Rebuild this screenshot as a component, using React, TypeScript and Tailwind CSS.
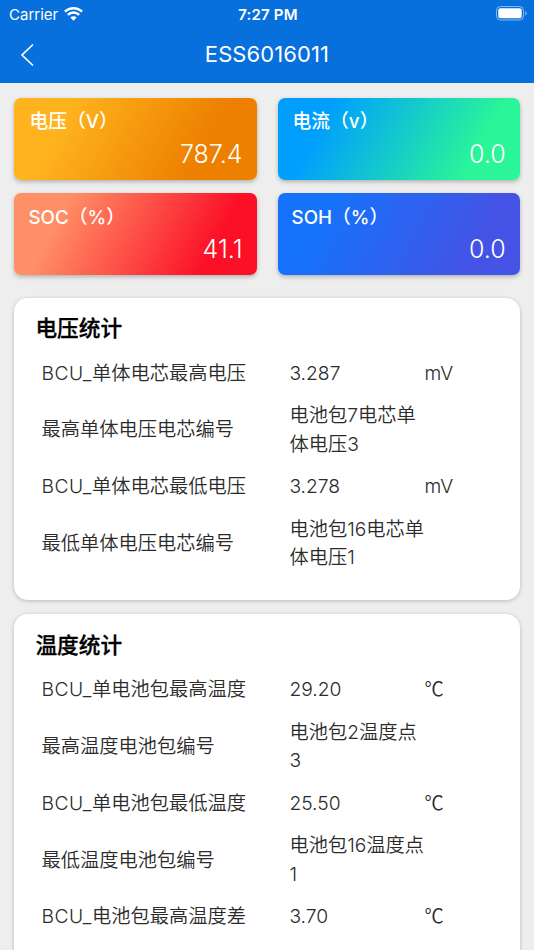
import React from 'react';

interface Metric {
  label: string;
  labelClass: string;
  unit: string;
  value: string;
  gradient: string;
}

interface StatRow {
  prefix?: string;
  label: string;
  value: string;
  unit?: string;
}

const metrics: Metric[] = [
  {
    label: '电压',
    labelClass: 'pl-px',
    unit: 'V',
    value: '787.4',
    gradient: 'bg-[linear-gradient(118deg,#ffb41f_20%,#ed8000_75%)]',
  },
  {
    label: '电流',
    labelClass: 'pl-px',
    unit: 'v',
    value: '0.0',
    gradient: 'bg-[linear-gradient(118deg,#009ffd_20%,#2af598_80%)]',
  },
  {
    label: 'SOC',
    labelClass: '',
    unit: '%',
    value: '41.1',
    gradient: 'bg-[linear-gradient(118deg,#ff8f66_20%,#fb1027_80%)]',
  },
  {
    label: 'SOH',
    labelClass: '',
    unit: '%',
    value: '0.0',
    gradient: 'bg-[linear-gradient(118deg,#1672fb_20%,#4453e5_80%)]',
  },
];

const voltageRows: StatRow[] = [
  { prefix: 'BCU_', label: '单体电芯最高电压', value: '3.287', unit: 'mV' },
  { label: '最高单体电压电芯编号', value: '电池包7电芯单体电压3' },
  { prefix: 'BCU_', label: '单体电芯最低电压', value: '3.278', unit: 'mV' },
  { label: '最低单体电压电芯编号', value: '电池包16电芯单体电压1' },
];

const temperatureRows: StatRow[] = [
  { prefix: 'BCU_', label: '单电池包最高温度', value: '29.20', unit: '℃' },
  { label: '最高温度电池包编号', value: '电池包2温度点3' },
  { prefix: 'BCU_', label: '单电池包最低温度', value: '25.50', unit: '℃' },
  { label: '最低温度电池包编号', value: '电池包16温度点1' },
  { prefix: 'BCU_', label: '电池包最高温度差', value: '3.70', unit: '℃' },
];

function StatusBar() {
  return (
    <div className="grid h-7 grid-cols-3 items-center pl-[9px] pr-[7px] text-[15px] leading-none">
      <div className="flex items-center gap-[6px]">
        <span>Carrier</span>
        <svg className="-mt-[2px]" width="19" height="15" viewBox="0 0 20 15" fill="none" stroke="white" strokeWidth="2.7">
          <path d="M1 5.6a12.9 12.9 0 0 1 18 0" />
          <path d="M4.1 8.9a8.4 8.4 0 0 1 11.8 0" />
          <path d="M10 15l-3.3-3.3a4.7 4.7 0 0 1 6.6 0z" fill="white" stroke="none" />
        </svg>
      </div>
      <span className="whitespace-nowrap text-center font-semibold tracking-[0.2px]">7:27 PM</span>
      <svg className="-mt-px justify-self-end" width="31" height="15" viewBox="0 0 31 15" fill="none">
        <rect x="0.5" y="0.5" width="27" height="13.5" rx="4" stroke="white" strokeOpacity="0.5" />
        <rect x="2.3" y="2.3" width="23.4" height="9.9" rx="2" fill="white" />
        <path d="M29.3 5v4.6c.9-.4 1.4-1.3 1.4-2.3s-.5-1.9-1.4-2.3z" fill="white" fillOpacity="0.5" />
      </svg>
    </div>
  );
}

function MetricCard({ metric }: { metric: Metric }) {
  return (
    <div
      className={`flex h-[82px] flex-col justify-between rounded-[7px] px-[14px] pb-[10px] pt-[9.6px] text-white shadow-[0_2px_4px_rgba(0,0,0,0.25)] ${metric.gradient}`}
    >
      <div className={`whitespace-nowrap text-[18.8px] font-medium leading-[29px] ${metric.labelClass}`}>
        {metric.label}（{metric.unit}）
      </div>
      <div className="text-right text-[25px] font-light leading-[32px]">{metric.value}</div>
    </div>
  );
}

function StatCard({ title, rows, className }: { title: string; rows: StatRow[]; className: string }) {
  return (
    <section className={`rounded-[14px] bg-white pl-[21px] pt-[15.8px] shadow-[0_1px_4px_rgba(0,0,0,0.22)] ${className}`}>
      <h2 className="text-[21.7px] font-medium leading-[31px] text-black [-webkit-text-stroke:0.3px_black]">{title}</h2>
      <div className="pl-[6px]">
        {rows.map((row) => (
          <div
            key={row.label}
            className="grid h-[56.8px] grid-cols-[248px_135px_1fr] items-center text-[19.25px] font-[350] leading-[28.4px] text-[#2b2b2b]"
          >
            <span className="whitespace-nowrap">
              {row.prefix && <span className="tracking-[0.55px]">{row.prefix}</span>}
              {row.label}
            </span>
            <span className="break-all">{row.value}</span>
            <span className={row.unit === '℃' ? "-mt-0.5 font-['Noto_Sans_CJK_SC',sans-serif]" : ''}>{row.unit}</span>
          </div>
        ))}
      </div>
    </section>
  );
}

export default function App() {
  return (
    <div
      lang="zh-CN"
      className="h-[950px] w-[534px] overflow-hidden bg-[#eee] font-['Inter','Noto_Sans_CJK_SC',sans-serif]"
    >
      <header className="h-[82.7px] bg-[#0870dc] text-white">
        <StatusBar />
        <div className="grid h-[54px] grid-cols-[60px_1fr_60px] items-center">
          <button type="button" className="pl-5" aria-label="返回">
            <svg width="14" height="24" viewBox="0 0 14 24" fill="none" stroke="white" strokeWidth="1.7">
              <path d="M13 1.5L2 12l11 10.5" />
            </svg>
          </button>
          <h1 className="-mt-[3px] text-center text-[22px] leading-none tracking-[0.1px]">ESS6016011</h1>
        </div>
      </header>

      <main className="px-[14.4px] pt-[15px]">
        <div className="grid grid-cols-2 gap-x-[21px] gap-y-[13.5px]">
          {metrics.map((metric) => (
            <MetricCard key={metric.label} metric={metric} />
          ))}
        </div>
        <StatCard title="电压统计" rows={voltageRows} className="mt-[22.5px] h-[302px]" />
        <StatCard title="温度统计" rows={temperatureRows} className="mt-[14.5px] h-[380px]" />
      </main>
    </div>
  );
}
